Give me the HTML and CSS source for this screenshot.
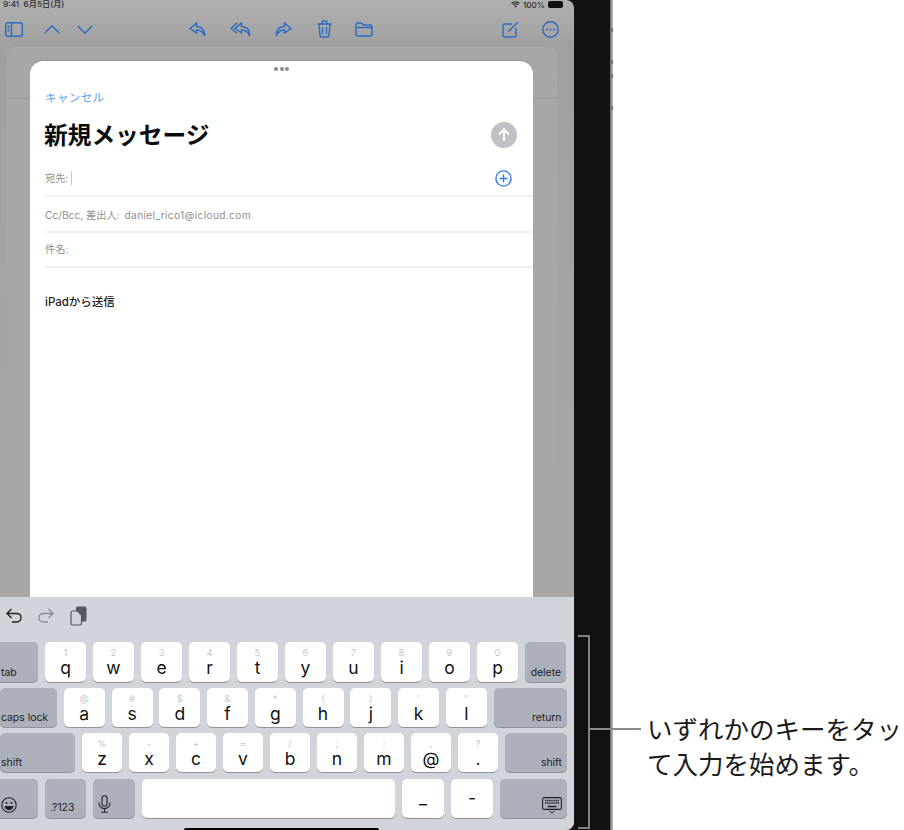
FILE: index.html
```html
<!DOCTYPE html>
<html lang="ja">
<head>
<meta charset="utf-8">
<title>新規メッセージ</title>
<link rel="stylesheet" href="styles.css">
</head>
<body>
<div class="stage">
  <div class="device">
    <div class="screen">
      <div class="status">
        <div class="status-time">9:41&nbsp;&nbsp;6月5日(月)</div>
        <div class="status-right">
          <svg class="wifi" width="9" height="7" viewBox="0 0 9 7"><path d="M0.5 2.4A5.6 5.6 0 0 1 8.5 2.4M1.9 3.9A3.6 3.6 0 0 1 7.1 3.9" fill="none" stroke="#222" stroke-width="1.1"/><path d="M3.2 5.2A1.8 1.8 0 0 1 5.8 5.2L4.5 6.8Z" fill="#222"/></svg>
          <span>100%</span>
          <span class="battery"></span>
        </div>
      </div>
      <div class="toolbar">
        <div class="tool-group group-left">
          <svg class="ic" width="18" height="15" viewBox="0 0 18 15"><rect x="0.7" y="0.7" width="16.6" height="13.6" rx="2" /><path d="M6.5 1V14M2.5 4H4.5M2.5 6.5H4.5M2.5 9H4.5"/></svg>
          <svg class="ic ic-up" width="16" height="9" viewBox="0 0 16 9"><path d="M0.7 8L8 1L15.3 8"/></svg>
          <svg class="ic ic-down" width="16" height="9" viewBox="0 0 16 9"><path d="M0.7 1L8 8L15.3 1"/></svg>
        </div>
        <div class="tool-group group-mid">
          <svg class="ic" width="17" height="15" viewBox="0 0 17 15"><path d="M7.5 1L1 6.5L7.5 11V8C11 8 14 9 15.7 14C16 8 13 4.5 7.5 4.5Z"/></svg>
          <svg class="ic ic-all" width="21" height="15" viewBox="0 0 21 15"><path d="M7 1L1 6.5L7 11"/><path d="M11.5 1L5 6.5L11.5 11V8C15 8 18 9 19.7 14C20 8 17 4.5 11.5 4.5Z"/></svg>
          <svg class="ic ic-fwd" width="17" height="15" viewBox="0 0 17 15"><path d="M9.5 1L16 6.5L9.5 11V8C6 8 3 9 1.3 14C1 8 4 4.5 9.5 4.5Z"/></svg>
          <svg class="ic ic-trash" width="15" height="18" viewBox="0 0 15 18"><path d="M0.5 4H14.5M5 4V2.2Q5 1 6.2 1H8.8Q10 1 10 2.2V4M2 4L3 15.6Q3.1 17 4.5 17H10.5Q11.9 17 12 15.6L13 4M5.5 7V14M9.5 7V14"/></svg>
          <svg class="ic ic-folder" width="18" height="15" viewBox="0 0 18 15"><path d="M1 3Q1 1 3 1H6.5L8.5 3H15Q17 3 17 5V12Q17 14 15 14H3Q1 14 1 12ZM1 5.5H17"/></svg>
        </div>
        <div class="tool-group group-right">
          <svg class="ic" width="17" height="17" viewBox="0 0 17 17"><path d="M10 3H2.5Q1 3 1 4.5V14.5Q1 16 2.5 16H12.5Q14 16 14 14.5V7"/><path d="M6.5 10.5L16 1"/></svg>
          <svg class="ic ic-more" width="17" height="17" viewBox="0 0 17 17"><circle cx="8.5" cy="8.5" r="7.7"/><circle class="dot" cx="5" cy="8.5" r="1"/><circle class="dot" cx="8.5" cy="8.5" r="1"/><circle class="dot" cx="12" cy="8.5" r="1"/></svg>
        </div>
      </div>
      <div class="main">
        <div class="mail-card"><div class="mail-line"></div></div>
        <div class="sheet">
          <div class="handle"><i></i><i></i><i></i></div>
          <div class="cancel">キャンセル</div>
          <div class="title-row">
            <h1 class="title">新規メッセージ</h1>
            <div class="send">
              <svg width="12" height="14" viewBox="0 0 12 14"><path d="M6 13V1.5M1 6.5L6 1.5L11 6.5" fill="none" stroke="#fff" stroke-width="2"/></svg>
            </div>
          </div>
          <div class="field field-to">
            <span class="label">宛先:</span><span class="caret"></span>
            <svg class="plus" width="17" height="17" viewBox="0 0 17 17"><circle cx="8.5" cy="8.5" r="7.6" fill="none" stroke="#2b7de0" stroke-width="1.4"/><path d="M8.5 4.5V12.5M4.5 8.5H12.5" stroke="#2b7de0" stroke-width="1.4"/></svg>
          </div>
          <div class="field field-cc"><span class="label">Cc/Bcc, 差出人:</span><span class="label from">daniel_rico1@icloud.com</span></div>
          <div class="field field-sub"><span class="label">件名:</span></div>
          <div class="body-text">iPadから送信</div>
        </div>
      </div>
      <div class="keyboard">
        <div class="kb-tools">
          <svg class="kb-ic" width="16" height="15" viewBox="0 0 16 15"><path d="M5.5 1L1 5.5L5.5 10M1 5.5H10.5Q15 5.5 15 9.5Q15 14 10.5 14H6" fill="none" stroke="#222" stroke-width="1.3"/></svg>
          <svg class="kb-ic" width="16" height="15" viewBox="0 0 16 15"><path d="M10.5 1L15 5.5L10.5 10M15 5.5H5.5Q1 5.5 1 9.5Q1 14 5.5 14H10" fill="none" stroke="#8a8d93" stroke-width="1.3"/></svg>
          <svg class="kb-ic" width="17" height="20" viewBox="0 0 17 20"><rect x="6" y="0.5" width="10.5" height="15" rx="1.5" fill="#55585e"/><path d="M1 6.5Q1 5 2.5 5H7.5L11.5 9V17.5Q11.5 19 10 19H2.5Q1 19 1 17.5Z" fill="#d1d4db" stroke="#55585e" stroke-width="1.2"/></svg>
        </div>
        <div class="row row-1">
          <div class="key fn fn-left w-tab">tab</div>
          <div class="key"><small>1</small><b>q</b></div>
          <div class="key"><small>2</small><b>w</b></div>
          <div class="key"><small>3</small><b>e</b></div>
          <div class="key"><small>4</small><b>r</b></div>
          <div class="key"><small>5</small><b>t</b></div>
          <div class="key"><small>6</small><b>y</b></div>
          <div class="key"><small>7</small><b>u</b></div>
          <div class="key"><small>8</small><b>i</b></div>
          <div class="key"><small>9</small><b>o</b></div>
          <div class="key"><small>0</small><b>p</b></div>
          <div class="key fn fn-right">delete</div>
        </div>
        <div class="row row-2">
          <div class="key fn fn-left w-caps">caps lock</div>
          <div class="key"><small>@</small><b>a</b></div>
          <div class="key"><small>#</small><b>s</b></div>
          <div class="key"><small>$</small><b>d</b></div>
          <div class="key"><small>&amp;</small><b>f</b></div>
          <div class="key"><small>*</small><b>g</b></div>
          <div class="key"><small>(</small><b>h</b></div>
          <div class="key"><small>)</small><b>j</b></div>
          <div class="key"><small>′</small><b>k</b></div>
          <div class="key"><small>″</small><b>l</b></div>
          <div class="key fn fn-right w-return">return</div>
        </div>
        <div class="row row-3">
          <div class="key fn fn-left w-shift">shift</div>
          <div class="key"><small>%</small><b>z</b></div>
          <div class="key"><small>-</small><b>x</b></div>
          <div class="key"><small>+</small><b>c</b></div>
          <div class="key"><small>=</small><b>v</b></div>
          <div class="key"><small>/</small><b>b</b></div>
          <div class="key"><small>;</small><b>n</b></div>
          <div class="key"><small>:</small><b>m</b></div>
          <div class="key"><small>,</small><b>@</b></div>
          <div class="key"><small>?</small><b>.</b></div>
          <div class="key fn fn-right w-rshift">shift</div>
        </div>
        <div class="row row-4">
          <div class="key fn fn-icon w-emoji">
            <svg width="16" height="16" viewBox="0 0 16 16"><circle cx="8" cy="8" r="7.2" fill="none" stroke="#222" stroke-width="1.1"/><circle cx="5.5" cy="6" r="1" fill="#222"/><circle cx="10.5" cy="6" r="1" fill="#222"/><path d="M3.5 9H12.5Q12 13 8 13Q4 13 3.5 9Z" fill="#222"/></svg>
          </div>
          <div class="key fn fn-num">.?123</div>
          <div class="key fn fn-icon w-mic">
            <svg width="13" height="18" viewBox="0 0 13 18"><rect x="4" y="0.7" width="5" height="10.6" rx="2.5" fill="none" stroke="#222" stroke-width="1.1"/><path d="M1 7.5Q1 13.5 6.5 13.5Q12 13.5 12 7.5M6.5 13.5V17M3 17.2H10" fill="none" stroke="#222" stroke-width="1.1"/></svg>
          </div>
          <div class="key w-space"></div>
          <div class="key w-punct"><b class="punct">_</b></div>
          <div class="key w-punct"><b class="punct">-</b></div>
          <div class="key fn fn-kbd w-kbd">
            <svg width="20" height="17" viewBox="0 0 20 17"><rect x="0.6" y="0.6" width="18.8" height="11.8" rx="1.5" fill="none" stroke="#222" stroke-width="1.1"/><path d="M3 3.5H17M3 6H17" stroke="#222" stroke-width="1.4" stroke-dasharray="1.4 0.7"/><path d="M5.5 9.5H14.5" stroke="#222" stroke-width="1.4"/><path d="M7.5 14L10 16L12.5 14" fill="none" stroke="#222" stroke-width="1"/></svg>
          </div>
        </div>
        <div class="home-bar"></div>
      </div>
    </div>
    <div class="bezel"></div>
    <div class="edge"><i class="btn btn-1"></i><i class="btn btn-2"></i><i class="btn btn-3"></i><i class="btn btn-4"></i></div>
    <div class="bracket"></div>
    <div class="leader"></div>
  </div>
  <div class="note">いずれかのキーをタッ<br>て入力を始めます。</div>
</div>
</body>
</html>
```
FILE: styles.css
```css
* { box-sizing: border-box; }
html, body { margin: 0; padding: 0; width: 904px; height: 830px; overflow: hidden; background: #fff; }
body { font-family: Inter, "Noto Sans CJK JP", sans-serif; color: #111; }
.stage { display: flex; width: 904px; height: 830px; overflow: hidden; }

/* device */
.device { position: relative; display: flex; flex: none; width: 613px; height: 830px; background: #111; }
.screen { display: flex; flex-direction: column; flex: none; width: 574px; height: 830px; overflow: hidden; border-radius: 0 8px 8px 0; background: linear-gradient(#b0b0b0 0, #a0a0a0 46px, #a5a5a5 300px, #a7a7a7 600px); }
.bezel { flex: 1; }
.edge { position: relative; flex: none; width: 3px; background: linear-gradient(90deg, #666, #c4c4c4); }
.btn { position: absolute; left: 1px; width: 2px; height: 4px; background: #777; }
.btn-1 { top: 28px; }
.btn-2 { top: 60px; }
.btn-3 { top: 74px; }
.btn-4 { top: 106px; }

/* status */
.status { display: flex; flex: none; justify-content: space-between; height: 9px; padding: 0 11px 0 3px; font-size: 8.2px; font-weight: 500; line-height: 8px; color: #2b2b2b; }
.status-right { display: flex; align-items: center; gap: 3px; }
.battery { display: block; width: 15px; height: 7px; border-radius: 2px; background: #111; }

/* toolbar */
.toolbar { display: flex; flex: none; align-items: center; height: 38px; padding: 3px 15px 0 5px; }
.tool-group { display: flex; align-items: center; }
.group-mid { margin-left: 96px; }
.group-right { margin-left: auto; }
.ic { display: block; fill: none; stroke: #2a6bc4; stroke-width: 1.4; flex: none; }
.ic-up { margin-left: 21px; }
.ic-down { margin-left: 17px; }
.ic-all { margin-left: 24px; }
.ic-fwd { margin-left: 24px; }
.ic-trash { margin-left: 25px; margin-top: -2px; }
.ic-folder { margin-left: 23px; }
.ic-more { margin-left: 23px; }
.dot { fill: #2a6bc4; stroke: none; }

/* mail area behind the sheet */
.main { position: relative; display: flex; flex: 1; min-height: 0; padding: 14px 41px 0 30px; }
.mail-card { position: absolute; left: 7px; top: 0; width: 550px; height: 700px; border-radius: 8px 8px 0 0; background: #a7a7a7; }
.mail-line { height: 1px; margin-top: 51px; background: #9b9b9b; }

/* sheet */
.sheet { position: relative; flex: 1; padding: 0 0 0 15px; border-radius: 13px 13px 0 0; background: #fff; box-shadow: 0 -1px 1px rgba(0,0,0,.12); }
.handle { display: flex; justify-content: center; gap: 1.5px; height: 8px; margin-left: -15px; padding-top: 6px; }
.handle i { display: block; width: 4px; height: 4px; border-radius: 50%; background: #8c8c8c; }
.cancel { margin-top: 21px; font-size: 11.5px; line-height: 16px; letter-spacing: .4px; color: #58a0f3; }
.title-row { display: flex; align-items: center; justify-content: space-between; height: 32px; margin-top: 14px; padding-right: 16px; }
.title { margin: 0 0 0 -1px; font-size: 23.7px; font-weight: 700; line-height: 32px; color: #0a0a0a; }
.send { display: flex; align-items: center; justify-content: center; width: 26px; height: 26px; margin-top: -2px; border-radius: 50%; background: #c1c1c5; }
.field { display: flex; align-items: center; height: 35px; border-bottom: 2px solid #f0f0f0; }
.field-to { height: 45px; padding: 8px 21px 0 0; }
.field-cc { height: 36px; padding-top: 1px; }
.field-sub { height: 35px; padding-bottom: 2px; }
.label { font-size: 10.2px; line-height: 14px; color: #8e8e8e; }
.from { margin-left: 5px; letter-spacing: .33px; }
.caret { width: 1px; height: 14px; margin-left: 3px; background: #a9c9f2; }
.plus { display: block; margin-left: auto; margin-top: 2px; }
.body-text { margin-top: 26px; font-size: 11.5px; font-weight: 500; line-height: 16px; color: #222; }

/* keyboard */
.keyboard { position: relative; z-index: 1; display: flex; flex: none; flex-direction: column; height: 233px; background: #d1d4db; }
.kb-tools { display: flex; align-items: center; height: 45px; padding: 0 0 8px 6px; gap: 16px; }
.row { display: flex; flex: none; height: 39px; }
.row-1 { height: 40px; gap: 7px; margin-left: -4px; }
.row-2 { gap: 6.75px; margin-top: 6px; }
.row-3 { gap: 7px; margin-top: 6px; }
.row-3 .key { width: 40px; }
.row-4 { gap: 7px; margin-top: 7px; margin-left: -5px; }
.key { position: relative; display: flex; flex: none; flex-direction: column; align-items: center; width: 41px; height: 100%; border-radius: 5px; background: #fff; box-shadow: 0 1px 0 #8f9298; }
.key small { margin-top: 5px; font-size: 9.5px; line-height: 12px; color: #c6c6ca; }
.key b { margin-top: -1px; font-size: 17.5px; font-weight: 400; line-height: 20px; color: #111; }
.fn { flex-direction: row; align-items: flex-end; padding-bottom: 2px; background: #abb0bb; font-size: 10.4px; line-height: 14px; color: #222; }
.fn-left { justify-content: flex-start; }
.fn-right { justify-content: flex-end; padding-right: 5px; }
.w-tab { width: 42px; padding-left: 5px; }
.row-2 .w-caps { width: 57px; padding-left: 1px; }
.row-2 .w-return { width: 73px; }
.row-3 .w-shift { width: 75px; padding-left: 1px; }
.row-3 .w-rshift { width: 62px; }
.fn-icon { align-items: center; justify-content: flex-start; padding: 10px 0 0 5px; }
.row-4 .w-emoji { width: 43px; padding: 12px 0 0 6px; }
.fn-num { justify-content: flex-start; padding: 0 0 3px 5px; }
.w-mic { width: 42px; }
.w-space { width: 253px; }
.w-punct { width: 42px; }
.key .punct { margin-top: 9px; }
.fn-kbd { justify-content: flex-end; align-items: flex-end; padding: 0 5px 4px 0; }
.w-kbd { width: 67px; }
.home-bar { position: absolute; left: 184px; bottom: 0; width: 195px; height: 2px; border-radius: 2px 2px 0 0; background: #000; }

/* annotation */
.bracket { position: absolute; left: 578px; top: 635px; width: 12px; height: 194px; border: 2px solid #808080; border-left: 0; }
.leader { position: absolute; left: 590px; top: 728px; width: 51px; height: 2px; background: #8a8a8a; }
.note { flex: none; width: 257px; margin: 710px 0 0 34px; font-family: "Noto Sans CJK JP", sans-serif; font-size: 25.5px; font-weight: 400; line-height: 35px; white-space: nowrap; color: #1a1a1a; }
```
